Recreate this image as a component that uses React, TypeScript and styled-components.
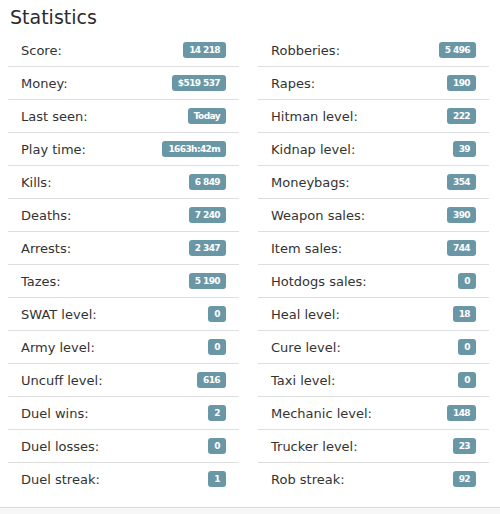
import React from 'react';
import styled, { createGlobalStyle } from 'styled-components';

const GlobalStyle = createGlobalStyle`
    body {
        margin: 0;
        background: #fff;
        font-family: "DejaVu Sans", "Open Sans", sans-serif;
        color: #2b2b2b;
    }
`

const Panel = styled.div`
    width: 500px;
    height: 514px;
    display: flex;
    flex-direction: column;
    background: #f7f7f7;
`

const Card = styled.section`
    background: #fff;
    border-bottom: 1px solid #dcdcdc;
    padding-bottom: 12px;
`

const Title = styled.h2`
    margin: 0;
    padding-left: 10px;
    height: 34px;
    line-height: 34px;
    font-size: 19px;
    font-weight: 400;
    color: #2b2b2b;
`

const Columns = styled.div`
    display: grid;
    grid-template-columns: 1fr 1fr;
    column-gap: 19px;
    padding: 0 11px 0 8px;
`

const List = styled.ul`
    list-style: none;
    margin: 0;
    padding: 0;
`

const Row = styled.li`
    display: flex;
    align-items: center;
    justify-content: space-between;
    height: 32px;
    padding: 0 13px;
    font-size: 13px;
    color: #333;
    border-bottom: 1px solid #dedede;

    &:last-child {
        border-bottom: none;
    }
`

const Badge = styled.span`
    display: inline-block;
    height: 16px;
    line-height: 16px;
    padding: 0 6px;
    border-radius: 3px;
    background: #6a97a6;
    color: #fff;
    font-size: 9px;
    font-weight: 700;
    letter-spacing: -0.6px;
`

const left: [string, string][] = [
    ['Score:', '14 218'],
    ['Money:', '$519 537'],
    ['Last seen:', 'Today'],
    ['Play time:', '1663h:42m'],
    ['Kills:', '6 849'],
    ['Deaths:', '7 240'],
    ['Arrests:', '2 347'],
    ['Tazes:', '5 190'],
    ['SWAT level:', '0'],
    ['Army level:', '0'],
    ['Uncuff level:', '616'],
    ['Duel wins:', '2'],
    ['Duel losses:', '0'],
    ['Duel streak:', '1'],
]

const right: [string, string][] = [
    ['Robberies:', '5 496'],
    ['Rapes:', '190'],
    ['Hitman level:', '222'],
    ['Kidnap level:', '39'],
    ['Moneybags:', '354'],
    ['Weapon sales:', '390'],
    ['Item sales:', '744'],
    ['Hotdogs sales:', '0'],
    ['Heal level:', '18'],
    ['Cure level:', '0'],
    ['Taxi level:', '0'],
    ['Mechanic level:', '148'],
    ['Trucker level:', '23'],
    ['Rob streak:', '92'],
]

const StatList = ({ items }: { items: [string, string][] }) => (
    <List>
        {items.map(([label, value]) => (
            <Row key={label}>
                <span>{label}</span>
                <Badge>{value}</Badge>
            </Row>
        ))}
    </List>
)

const App = () => {
    return (
        <Panel>
            <GlobalStyle />
            <Card>
                <Title>Statistics</Title>
                <Columns>
                    <StatList items={left} />
                    <StatList items={right} />
                </Columns>
            </Card>
        </Panel>
    )
}

export default App;
